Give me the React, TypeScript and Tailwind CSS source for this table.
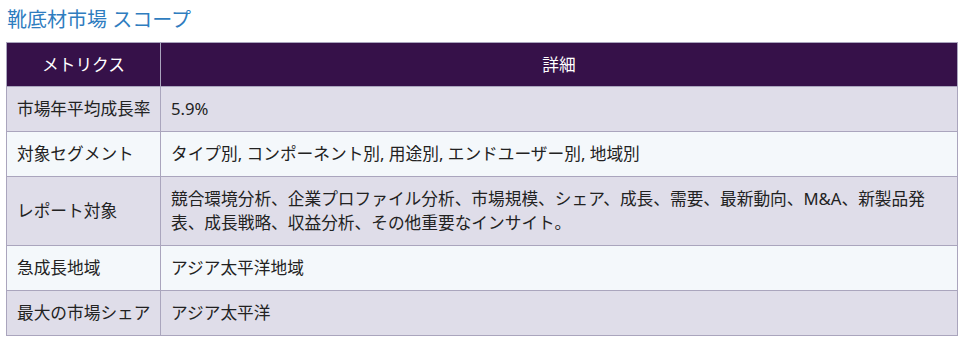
const rows: [string, string][] = [
  ["市場年平均成長率", "5.9%"],
  ["対象セグメント", "タイプ別, コンポーネント別, 用途別, エンドユーザー別, 地域別"],
  [
    "レポート対象",
    "競合環境分析、企業プロファイル分析、市場規模、シェア、成長、需要、最新動向、M&A、新製品発表、成長戦略、収益分析、その他重要なインサイト。",
  ],
  ["急成長地域", "アジア太平洋地域"],
  ["最大の市場シェア", "アジア太平洋"],
];

export default function App() {
  return (
    <div className="w-[969px] h-[342px] bg-white px-[6px] pt-[6px] font-['Noto_Sans','Noto_Sans_CJK_JP',sans-serif] text-[#222]">
      <h2 className="text-[20px] leading-[28px] text-[#2f7dbf] pl-px">靴底材市場 スコープ</h2>
      <table className="mt-[8px] w-[952px] table-fixed border-collapse border border-[#aaa5bd] text-[16.7px] leading-6">
        <colgroup>
          <col className="w-[154px]" />
          <col />
        </colgroup>
        <thead>
          <tr className="bg-[#361149] text-white">
            <th className="border border-[#aaa5bd] pt-[10px] pb-[9px] font-normal text-center">メトリクス</th>
            <th className="border border-[#aaa5bd] pt-[10px] pb-[9px] font-normal text-center">詳細</th>
          </tr>
        </thead>
        <tbody>
          {rows.map(([k, v], i) => (
            <tr key={k} className={i % 2 === 0 ? "bg-[#dfdde9]" : "bg-[#f4f8fb]"}>
              <td className="border border-[#aaa5bd] pl-[10px] pr-0 pt-[10px] pb-[10px] whitespace-nowrap align-middle">{k}</td>
              <td className="border border-[#aaa5bd] px-[10px] pt-[10px] pb-[10px] align-middle">{v}</td>
            </tr>
          ))}
        </tbody>
      </table>
    </div>
  );
}
